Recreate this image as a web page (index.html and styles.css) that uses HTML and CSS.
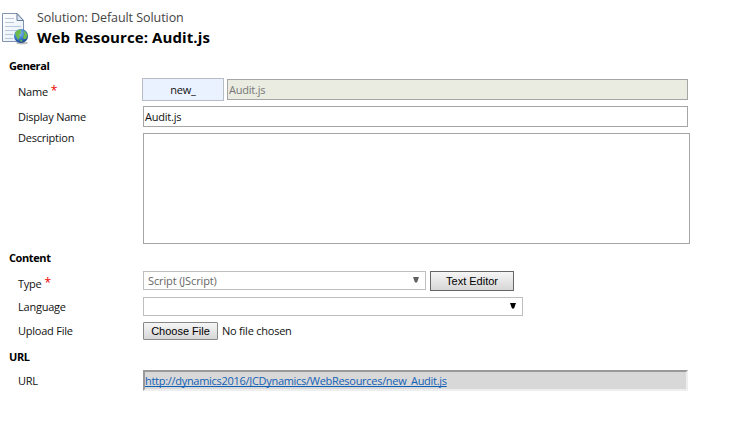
FILE: index.html
```html
<!DOCTYPE html>
<html lang="en">
<head>
<meta charset="utf-8">
<title>Web Resource: Audit.js</title>
<link rel="stylesheet" href="styles.css">
</head>
<body>
<header class="header">
  <svg class="doc-icon" width="28" height="34" viewBox="0 0 28 34">
    <defs>
      <linearGradient id="paper" x1="0" y1="0" x2="1" y2="1"><stop offset="0" stop-color="#fff"/><stop offset="1" stop-color="#e4edf7"/></linearGradient>
      <radialGradient id="sea" cx=".38" cy=".3" r=".75"><stop offset="0" stop-color="#9cc8f5"/><stop offset=".5" stop-color="#3f7fce"/><stop offset="1" stop-color="#163f85"/></radialGradient>
    </defs>
    <path d="M1.500 1.500H16L22.500 8.500V29.500H1.500Z" fill="url(#paper)" stroke="#8194ad"/>
    <path d="M16 1.500V8.500H22.500Z" fill="#dce6f2" stroke="#667b98"/>
    <path d="M4 6.500H13M4 10.500H13M4 14.500H20M4 18.500H17M4 22.500H12M4 26.500H12" stroke="#b9c7dc"/>
    <ellipse cx="21" cy="31" rx="6" ry="1.500" fill="#bbb"/>
    <circle cx="20" cy="24" r="7" fill="url(#sea)"/>
    <path d="M14 21L16.500 18L20.500 17.500L19.500 20L20.500 21L18 23L19 25L17 28L15.500 25ZM22 19L24.500 19.500L26.500 23L25 27L22.500 27L22 24.500L23.500 22ZM18.500 29L20.500 27.500L21.500 30Z" fill="#6dbb4b"/>
  </svg>
  <div class="titles">
    <div class="solution">Solution: Default Solution</div>
    <h1 class="title">Web Resource: Audit.js</h1>
  </div>
</header>
<main class="form">
  <h2 class="section general">General</h2>
  <div class="row name-row">
    <div class="label name-label">Name<span class="required">*</span></div>
    <div class="prefix"><span>new_</span></div>
    <div class="input disabled"><span>Audit.js</span></div>
  </div>
  <div class="row display-row">
    <div class="label display-label">Display Name</div>
    <div class="input"><span>Audit.js</span></div>
  </div>
  <div class="row desc-row">
    <div class="label desc-label">Description</div>
    <div class="textarea"></div>
  </div>
  <h2 class="section content">Content</h2>
  <div class="row type-row">
    <div class="label type-label">Type<span class="required">*</span></div>
    <div class="select type-select"><span class="script">Script (JScript)</span><svg class="arrow" width="6" height="6" viewBox="0 0 6 6"><path d="M0 0H6L4 5.500H2Z"/></svg></div>
    <button class="button editor">Text Editor</button>
  </div>
  <div class="row lang-row">
    <div class="label lang-label">Language</div>
    <div class="select lang-select"><svg class="arrow" width="6" height="6" viewBox="0 0 6 6"><path d="M0 0H6L4 5.500H2Z"/></svg></div>
  </div>
  <div class="row upload-row">
    <div class="label">Upload File</div>
    <button class="button choose">Choose File</button>
    <span class="no-file">No file chosen</span>
  </div>
  <h2 class="section url">URL</h2>
  <div class="row url-row">
    <div class="label url-label">URL</div>
    <div class="url-box"><a class="link" href="#">http://dynamics2016/JCDynamics/WebResources/new_Audit.js</a></div>
  </div>
</main>
</body>
</html>
```
FILE: styles.css
```css
* { box-sizing: border-box; }
body { margin: 0; background: #fff; color: #111; font: 11px/16px "Open Sans", "Noto Sans", sans-serif; letter-spacing: -0.23px; }
.header { display: flex; height: 56px; padding-top: 8px; }
.doc-icon { margin: 4px 0 0 1px; width: 28px; height: 34px; }
.titles { margin-left: 8px; }
.solution { font-size: 12.5px; line-height: 20px; letter-spacing: -0.06px; color: #444; white-space: nowrap; }
.title { margin: 0; padding-top: 0; font-size: 15px; line-height: 19px; letter-spacing: 0.1px; font-weight: 700; color: #000; white-space: nowrap; }
.section { margin: 0; padding-left: 9px; height: 22px; font-size: 11px; line-height: 20px; letter-spacing: -0.4px; font-weight: 700; color: #000; }
.row { display: flex; width: 690px; padding-left: 18px; }
.label { width: 125px; flex: none; line-height: 20px; white-space: nowrap; }
.required { position: relative; top: -1px; color: #e00; font-size: 12px; line-height: 10px; margin-left: 3px; }
.name-row { height: 28px; }
.name-label { width: 124px; padding-top: 4px; }
.prefix { width: 82px; height: 23px; margin-right: 3px; border: 1px solid #b8bcc4; background: #eaf1ff; text-align: center; line-height: 22px; }
.input { width: 545px; height: 21px; border: 1px solid #a5a5a5; padding-left: 1px; line-height: 19px; }
.disabled { width: 461px; margin-top: 1px; background: #eaebe1; color: #777; }
.display-row { height: 27px; }
.display-label { padding-top: 1px; }
.desc-row { height: 115px; }
.desc-label { margin-top: -5px; }
.textarea { width: 547px; height: 111px; border: 1px solid #a5a5a5; }
.content { height: 23px; }
.type-row { height: 26px; }
.type-label { padding-top: 3px; }
.select { display: flex; justify-content: space-between; height: 19px; border: 1px solid #bebebe; padding: 0 6px 0 4px; line-height: 18px; }
.type-select { width: 283px; color: #666; margin-right: 4px; letter-spacing: -0.13px; }
.lang-select { width: 380px; justify-content: flex-end; }
.arrow { width: 6px; height: 6px; margin-top: 5px; fill: #000; }
.type-select .arrow { fill: #606060; }
.button { padding: 0; border: 1px solid #666; background: linear-gradient(#f6f6f6, #d6d6d6); color: #000; font: 11px/16px "Liberation Sans", Arial, sans-serif; letter-spacing: 0; white-space: nowrap; }
.editor { width: 84px; height: 20px; }
.lang-row { height: 25px; }
.choose { width: 75px; height: 18px; border-color: #888; border-radius: 1px; }
.upload-row { height: 25px; }
.upload-row .label { line-height: 18px; }
.no-file { margin-left: 4px; line-height: 18px; }
.url { height: 23px; }
.url-label { padding-top: 1px; }
.url-box { width: 545px; height: 21px; border: 2px solid; border-color: #999 #eee #eee #999; background: #d8d8d8; line-height: 17px; letter-spacing: -0.29px; }
.link { color: #1160b7; text-decoration: underline; text-decoration-skip-ink: none; }
```
